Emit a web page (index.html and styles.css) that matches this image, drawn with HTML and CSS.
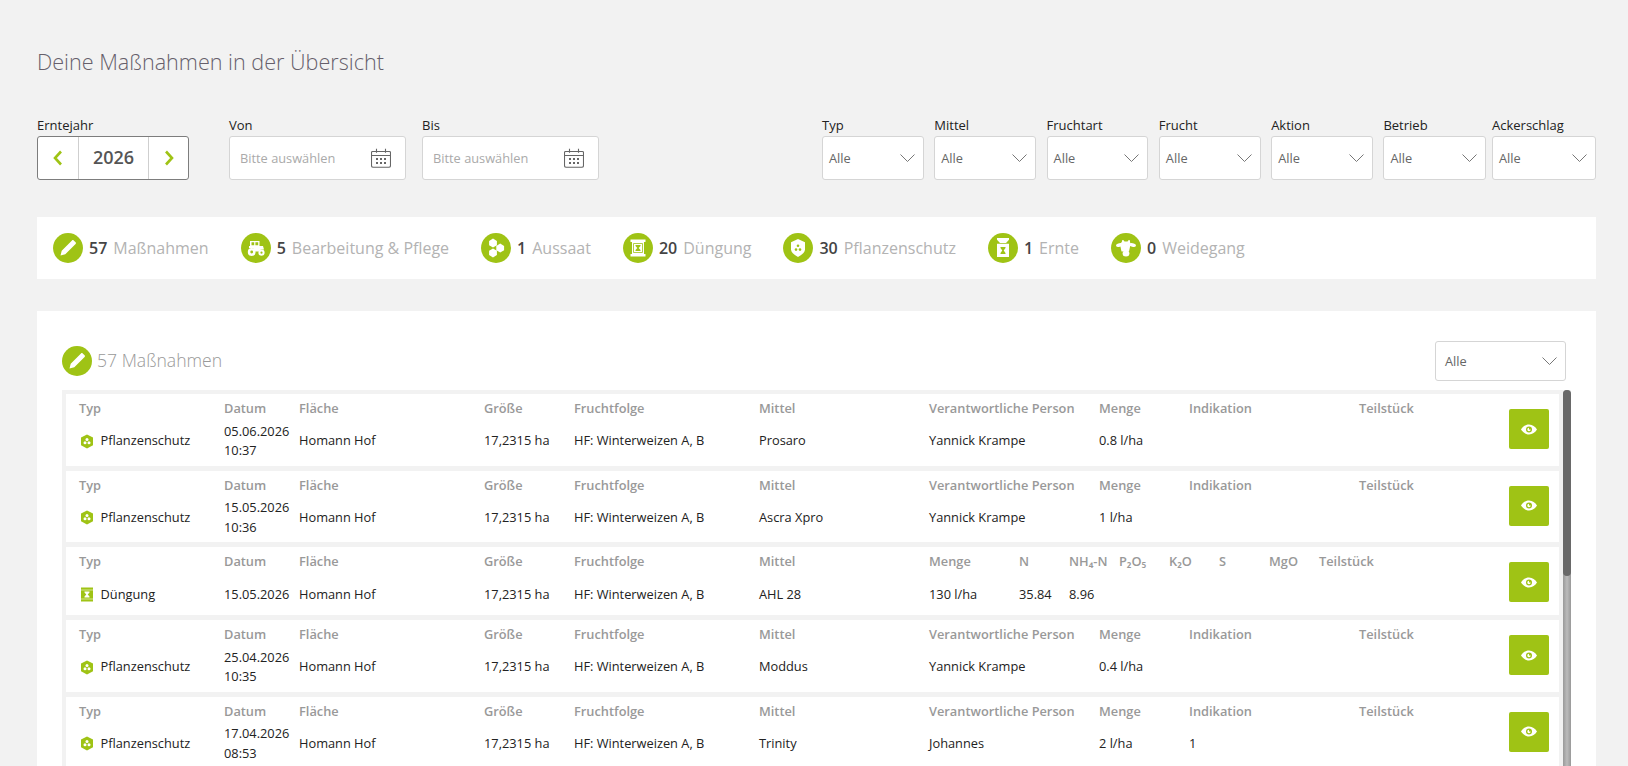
FILE: index.html
```html
<!DOCTYPE html>
<html lang="de">
<head>
<meta charset="utf-8">
<title>Maßnahmen</title>
<link rel="stylesheet" href="styles.css">
</head>
<body>
<svg class="defs" width="0" height="0" aria-hidden="true">
  <defs>
    <symbol id="i-pencil" viewBox="0 0 30 30"><circle cx="15" cy="15" r="15" fill="#9fc315"/><path d="M7.5 22.5l1.2-4.8L19 7.4c.5-.5 1.2-.5 1.7 0l1.900 1.900c.5.5.5 1.200 0 1.700L12.300 21.300z" fill="#fff"/></symbol>
    <symbol id="i-tractor" viewBox="0 0 30 30"><circle cx="15" cy="15" r="15" fill="#9fc315"/><path d="M9 8h9.500v5H22l1 3.500h-3l-2.500 2h-3.500l-2-3.500H8v-2h1zM10.500 9.300v3h2.700v-3zM14.400 9.300v3h2.800v-3z" fill="#fff" fill-rule="evenodd"/><circle cx="10.700" cy="19" r="3.900" fill="#fff"/><circle cx="10.700" cy="19" r="1.400" fill="#9fc315"/><circle cx="20.500" cy="19.700" r="3.100" fill="#fff"/><circle cx="20.500" cy="19.700" r="1.100" fill="#9fc315"/></symbol>
    <symbol id="i-seed" viewBox="0 0 30 30"><circle cx="15" cy="15" r="15" fill="#9fc315"/><path d="M12 5.600l3.900 2.300v4.400L12 14.600l-3.900-2.300V7.900zM19.200 10.600l3.900 2.300v4.400l-3.900 2.300-3.900-2.300v-4.400zM12 15.400l3.900 2.300v4.400L12 24.400l-3.900-2.300v-4.400z" fill="#fff"/></symbol>
    <symbol id="i-fert" viewBox="0 0 30 30"><circle cx="15" cy="15" r="15" fill="#9fc315"/><path d="M7.500 6.500h15V9h-1.500v12h1.500v2.500h-15V21H9V9H7.500z" fill="#fff"/><path d="M10.500 10.500h9v9h-9z" fill="none" stroke="#9fc315" stroke-width=".8"/><path d="M12.500 12h5v1l-1.800 2 1.800 2v1h-5v-1l1.800-2-1.800-2z" fill="#9fc315"/></symbol>
    <symbol id="i-shield" viewBox="0 0 30 30"><circle cx="15" cy="15" r="15" fill="#9fc315"/><path d="M15 6l7 3.200v7.300c0 3-3.300 5.400-7 7.500-3.700-2.100-7-4.500-7-7.500V9.200z" fill="#fff"/><circle cx="15" cy="12.800" r="1.300" fill="#9fc315"/><circle cx="13" cy="16.600" r="1.300" fill="#9fc315"/><circle cx="17" cy="16.600" r="1.300" fill="#9fc315"/></symbol>
    <symbol id="i-harvest" viewBox="0 0 30 30"><circle cx="15" cy="15" r="15" fill="#9fc315"/><path d="M9 5h12v1.800L18 10h-6L9 6.800zM9 10.800h12V24H9z" fill="#fff"/><path d="M12.500 14h5v1l-1.800 2.500 1.800 2.500v1h-5v-1l1.800-2.500-1.800-2.500z" fill="#9fc315"/></symbol>
    <symbol id="i-cow" viewBox="0 0 30 30"><circle cx="15" cy="15" r="15" fill="#9fc315"/><path d="M11 8.500c-.2-1 .8-1.800 1.500-1.200l1 1.200h3l1-1.200c.7-.6 1.700.2 1.500 1.200l.5 3-1.500 7h-7.500l-1.500-7z" fill="#fff"/><ellipse cx="8.500" cy="12" rx="3.500" ry="1.800" fill="#fff" transform="rotate(-12 8.500 12)"/><ellipse cx="21.500" cy="12" rx="3.500" ry="1.800" fill="#fff" transform="rotate(12 21.500 12)"/><ellipse cx="15" cy="20.500" rx="3.400" ry="3" fill="#fff"/></symbol>
    <symbol id="i-shield-s" viewBox="0 0 14 15"><path d="M7 .5l6 3v7.700l-6 3.300-6-3.300V3.500z" fill="#9fc315"/><circle cx="7" cy="5.600" r="1.500" fill="#fff"/><circle cx="5" cy="8.800" r="1.500" fill="#fff"/><circle cx="9" cy="8.800" r="1.500" fill="#fff"/></symbol>
    <symbol id="i-fert-s" viewBox="0 0 14 15"><path d="M1 .5h12v14H1z" fill="#9fc315"/><path d="M1 2.500h12v1H1zM1 11.500h12v1H1z" fill="#d6e58f"/><path d="M4.500 4.500h5v1L7.700 7.500l1.800 2v1h-5v-1l1.800-2-1.800-2z" fill="#fff"/></symbol>
    <symbol id="i-eye" viewBox="0 0 16 11"><path d="M8 .5c3.500 0 6.200 2.300 8 5-1.800 2.700-4.500 5-8 5s-6.200-2.300-8-5c1.800-2.700 4.500-5 8-5z" fill="#fff"/><circle cx="8" cy="5.500" r="3" fill="#9fc315"/><path d="M8 3.800a1.700 1.700 0 1 0 1.700 1.700H8z" fill="#fff"/></symbol>
    <symbol id="i-cal" viewBox="0 0 20 20"><path d="M1.500 3.500h17c.5 0 1 .5 1 1v13c0 1-.8 1.800-1.800 1.800H2.300c-1 0-1.800-.8-1.800-1.800v-13c0-.5.500-1 1-1zM.5 7.500h19M5.500 .8v4M14.500 .8v4" fill="none" stroke="#666" stroke-width="1.100"/><path d="M5 10h2v2H5zM9 10h2v2H9zM13 10h2v2h-2zM5 14h2v2H5zM9 14h2v2H9zM13 14h2v2h-2z" fill="#666"/></symbol>
    <symbol id="i-down" viewBox="0 0 15 8"><path d="M.5.500l7 7 7-7" fill="none" stroke="#777" stroke-width="1"/></symbol>
    <symbol id="i-left" viewBox="0 0 10 16"><path d="M8 1.500L2 8l6 6.500" fill="none" stroke="#9fc315" stroke-width="2.600"/></symbol>
    <symbol id="i-right" viewBox="0 0 10 16"><path d="M2 1.500L8 8l-6 6.500" fill="none" stroke="#9fc315" stroke-width="2.600"/></symbol>
  </defs>
</svg>

<main class="page">
  <h1 class="title">Deine Maßnahmen in der Übersicht</h1>

  <section class="filters">
    <div class="filters-left">
      <div class="field">
        <label class="field-label">Erntejahr</label>
        <div class="year">
          <span class="year-btn year-prev"><svg class="chev"><use href="#i-left"/></svg></span>
          <span class="year-value">2026</span>
          <span class="year-btn year-next"><svg class="chev"><use href="#i-right"/></svg></span>
        </div>
      </div>
      <div class="field field-date field-von">
        <label class="field-label">Von</label>
        <div class="control date"><span>Bitte auswählen</span><svg class="cal"><use href="#i-cal"/></svg></div>
      </div>
      <div class="field field-date">
        <label class="field-label">Bis</label>
        <div class="control date"><span>Bitte auswählen</span><svg class="cal"><use href="#i-cal"/></svg></div>
      </div>
    </div>
    <div class="filters-right">
      <div class="field field-select"><label class="field-label">Typ</label><div class="control select"><span>Alle</span><svg class="down"><use href="#i-down"/></svg></div></div>
      <div class="field field-select"><label class="field-label">Mittel</label><div class="control select"><span>Alle</span><svg class="down"><use href="#i-down"/></svg></div></div>
      <div class="field field-select"><label class="field-label">Fruchtart</label><div class="control select"><span>Alle</span><svg class="down"><use href="#i-down"/></svg></div></div>
      <div class="field field-select"><label class="field-label">Frucht</label><div class="control select"><span>Alle</span><svg class="down"><use href="#i-down"/></svg></div></div>
      <div class="field field-select"><label class="field-label">Aktion</label><div class="control select"><span>Alle</span><svg class="down"><use href="#i-down"/></svg></div></div>
      <div class="field field-select field-wide"><label class="field-label">Betrieb</label><div class="control select"><span>Alle</span><svg class="down"><use href="#i-down"/></svg></div></div>
      <div class="field field-select field-tight"><label class="field-label">Ackerschlag</label><div class="control select"><span>Alle</span><svg class="down"><use href="#i-down"/></svg></div></div>
    </div>
  </section>

  <section class="stats">
    <div class="stat"><svg class="stat-icon"><use href="#i-pencil"/></svg><b>57</b><span>Maßnahmen</span></div>
    <div class="stat"><svg class="stat-icon"><use href="#i-tractor"/></svg><b>5</b><span>Bearbeitung &amp; Pflege</span></div>
    <div class="stat"><svg class="stat-icon"><use href="#i-seed"/></svg><b>1</b><span>Aussaat</span></div>
    <div class="stat"><svg class="stat-icon"><use href="#i-fert"/></svg><b>20</b><span>Düngung</span></div>
    <div class="stat"><svg class="stat-icon"><use href="#i-shield"/></svg><b>30</b><span>Pflanzenschutz</span></div>
    <div class="stat"><svg class="stat-icon"><use href="#i-harvest"/></svg><b>1</b><span>Ernte</span></div>
    <div class="stat"><svg class="stat-icon"><use href="#i-cow"/></svg><b>0</b><span>Weidegang</span></div>
  </section>

  <section class="card">
    <header class="card-head">
      <div class="card-title"><svg class="stat-icon"><use href="#i-pencil"/></svg><h2>57 Maßnahmen</h2></div>
      <div class="control select card-select"><span>Alle</span><svg class="down"><use href="#i-down"/></svg></div>
    </header>

    <div class="list">
      <article class="row row-protect">
        <div class="cell"><div class="th">Typ</div><div class="td type"><svg class="type-icon"><use href="#i-shield-s"/></svg>Pflanzenschutz</div></div>
        <div class="cell"><div class="th">Datum</div><div class="td">05.06.2026<br>10:37</div></div>
        <div class="cell"><div class="th">Fläche</div><div class="td">Homann Hof</div></div>
        <div class="cell"><div class="th">Größe</div><div class="td">17,2315 ha</div></div>
        <div class="cell"><div class="th">Fruchtfolge</div><div class="td">HF: Winterweizen A, B</div></div>
        <div class="cell"><div class="th">Mittel</div><div class="td">Prosaro</div></div>
        <div class="cell"><div class="th">Verantwortliche Person</div><div class="td">Yannick Krampe</div></div>
        <div class="cell"><div class="th">Menge</div><div class="td">0.8 l/ha</div></div>
        <div class="cell"><div class="th">Indikation</div><div class="td"></div></div>
        <div class="cell"><div class="th">Teilstück</div><div class="td"></div></div>
        <button class="eye"><svg class="eye-icon"><use href="#i-eye"/></svg></button>
      </article>

      <article class="row row-protect">
        <div class="cell"><div class="th">Typ</div><div class="td type"><svg class="type-icon"><use href="#i-shield-s"/></svg>Pflanzenschutz</div></div>
        <div class="cell"><div class="th">Datum</div><div class="td">15.05.2026<br>10:36</div></div>
        <div class="cell"><div class="th">Fläche</div><div class="td">Homann Hof</div></div>
        <div class="cell"><div class="th">Größe</div><div class="td">17,2315 ha</div></div>
        <div class="cell"><div class="th">Fruchtfolge</div><div class="td">HF: Winterweizen A, B</div></div>
        <div class="cell"><div class="th">Mittel</div><div class="td">Ascra Xpro</div></div>
        <div class="cell"><div class="th">Verantwortliche Person</div><div class="td">Yannick Krampe</div></div>
        <div class="cell"><div class="th">Menge</div><div class="td">1 l/ha</div></div>
        <div class="cell"><div class="th">Indikation</div><div class="td"></div></div>
        <div class="cell"><div class="th">Teilstück</div><div class="td"></div></div>
        <button class="eye"><svg class="eye-icon"><use href="#i-eye"/></svg></button>
      </article>

      <article class="row row-fert">
        <div class="cell"><div class="th">Typ</div><div class="td type"><svg class="type-icon"><use href="#i-fert-s"/></svg>Düngung</div></div>
        <div class="cell"><div class="th">Datum</div><div class="td">15.05.2026</div></div>
        <div class="cell"><div class="th">Fläche</div><div class="td">Homann Hof</div></div>
        <div class="cell"><div class="th">Größe</div><div class="td">17,2315 ha</div></div>
        <div class="cell"><div class="th">Fruchtfolge</div><div class="td">HF: Winterweizen A, B</div></div>
        <div class="cell"><div class="th">Mittel</div><div class="td">AHL 28</div></div>
        <div class="cell"><div class="th">Menge</div><div class="td">130 l/ha</div></div>
        <div class="cell"><div class="th">N</div><div class="td">35.84</div></div>
        <div class="cell"><div class="th">NH₄-N</div><div class="td">8.96</div></div>
        <div class="cell"><div class="th">P₂O₅</div><div class="td"></div></div>
        <div class="cell"><div class="th">K₂O</div><div class="td"></div></div>
        <div class="cell"><div class="th">S</div><div class="td"></div></div>
        <div class="cell"><div class="th">MgO</div><div class="td"></div></div>
        <div class="cell"><div class="th">Teilstück</div><div class="td"></div></div>
        <button class="eye"><svg class="eye-icon"><use href="#i-eye"/></svg></button>
      </article>

      <article class="row row-protect">
        <div class="cell"><div class="th">Typ</div><div class="td type"><svg class="type-icon"><use href="#i-shield-s"/></svg>Pflanzenschutz</div></div>
        <div class="cell"><div class="th">Datum</div><div class="td">25.04.2026<br>10:35</div></div>
        <div class="cell"><div class="th">Fläche</div><div class="td">Homann Hof</div></div>
        <div class="cell"><div class="th">Größe</div><div class="td">17,2315 ha</div></div>
        <div class="cell"><div class="th">Fruchtfolge</div><div class="td">HF: Winterweizen A, B</div></div>
        <div class="cell"><div class="th">Mittel</div><div class="td">Moddus</div></div>
        <div class="cell"><div class="th">Verantwortliche Person</div><div class="td">Yannick Krampe</div></div>
        <div class="cell"><div class="th">Menge</div><div class="td">0.4 l/ha</div></div>
        <div class="cell"><div class="th">Indikation</div><div class="td"></div></div>
        <div class="cell"><div class="th">Teilstück</div><div class="td"></div></div>
        <button class="eye"><svg class="eye-icon"><use href="#i-eye"/></svg></button>
      </article>

      <article class="row row-protect">
        <div class="cell"><div class="th">Typ</div><div class="td type"><svg class="type-icon"><use href="#i-shield-s"/></svg>Pflanzenschutz</div></div>
        <div class="cell"><div class="th">Datum</div><div class="td">17.04.2026<br>08:53</div></div>
        <div class="cell"><div class="th">Fläche</div><div class="td">Homann Hof</div></div>
        <div class="cell"><div class="th">Größe</div><div class="td">17,2315 ha</div></div>
        <div class="cell"><div class="th">Fruchtfolge</div><div class="td">HF: Winterweizen A, B</div></div>
        <div class="cell"><div class="th">Mittel</div><div class="td">Trinity</div></div>
        <div class="cell"><div class="th">Verantwortliche Person</div><div class="td">Johannes</div></div>
        <div class="cell"><div class="th">Menge</div><div class="td">2 l/ha</div></div>
        <div class="cell"><div class="th">Indikation</div><div class="td">1</div></div>
        <div class="cell"><div class="th">Teilstück</div><div class="td"></div></div>
        <button class="eye"><svg class="eye-icon"><use href="#i-eye"/></svg></button>
      </article>

      <div class="scrollbar"><div class="scrollbar-thumb"></div></div>
    </div>
  </section>
</main>
</body>
</html>
```
FILE: styles.css
```css
* { box-sizing: border-box; }
html, body { margin: 0; height: 766px; overflow: hidden; background: #f2f2f2; }
body { font-family: "Open Sans", "Liberation Sans", sans-serif; font-size: 12.800px; color: #222; }
.defs { position: absolute; }

.page { width: 1559px; margin-left: 37px; padding-top: 47px; }
.title { margin: 0; font-size: 21.600px; line-height: 30px; font-weight: 300; color: #665f6b; }

.filters { display: flex; justify-content: space-between; margin-top: 38px; }
.filters-left, .filters-right { display: flex; }
.filters-right { gap: 10.600px; }
.field-label { display: block; height: 21px; line-height: 20px; font-size: 13px; color: #222; }
.field-date { width: 177px; }
.field-von { margin: 0 16px 0 40px; }
.field-select { width: 101.700px; }
.field-wide { width: 103px; }
.field-tight { width: 104px; margin-left: -5px; }

.year { display: flex; width: 152px; height: 44px; background: #fff; border: 1px solid #7d7d7d; border-radius: 3px; align-items: stretch; }
.year-btn { display: flex; align-items: center; justify-content: center; }
.year-prev { width: 41px; border-right: 1px solid #cfcfcf; }
.year-next { flex: 1; border-left: 1px solid #cfcfcf; }
.year-value { width: 69px; text-align: center; line-height: 40px; font-size: 18px; font-weight: 600; color: #555; }
.chev { width: 10px; height: 16px; }

.control { display: flex; align-items: center; justify-content: space-between; height: 44px; background: #fff; border: 1px solid #d5d5d5; border-radius: 3px; }
.date { padding: 0 14px 0 10px; color: #aaa; }
.cal { width: 20px; height: 20px; }
.select { padding: 0 8px 0 6px; color: #666; }
.down { width: 15px; height: 8px; }

.stats { display: flex; gap: 32px; align-items: center; height: 62px; margin-top: 37px; padding-left: 16px; background: #fff; font-size: 16px; }
.stat { display: flex; align-items: center; }
.stat-icon { width: 30px; height: 30px; margin-right: 6px; }
.stat b { font-weight: 600; color: #444; margin-right: 6px; }
.stat span { color: #b3b3b3; }

.card { height: 500px; margin-top: 32px; padding: 30px 25px 0; background: #fff; }
.card-head { display: flex; justify-content: space-between; align-items: center; height: 40px; padding-right: 5px; margin-bottom: 9px; }
.card-title { display: flex; align-items: center; }
.card-title .stat-icon { margin-right: 5px; }
.card-title h2 { margin: 0 0 2px; font-size: 17.600px; font-weight: 300; color: #999; }
.card-select { width: 131px; height: 40px; padding: 0 8px 0 9px; border-radius: 3px; }

.list { position: relative; display: flex; flex-direction: column; gap: 5px; padding: 4px 12px 0 4px; background: #f2f2f2; }
.row { display: grid; align-items: start; padding: 4px 10px 5px 13px; background: #fff; }
.row-protect { grid-template-columns: 145px 75px 185px 90px 185px 170px 170px 90px 170px 1fr 40px; }
.row-fert { grid-template-columns: 145px 75px 185px 90px 185px 170px 90px 50px 50px 50px 50px 50px 50px 1fr 40px; padding-bottom: 1.200px; }
.cell { display: flex; flex-direction: column; }
.th { height: 20px; line-height: 20px; font-weight: 600; color: #999; white-space: nowrap; }
.td { display: flex; flex-direction: column; justify-content: center; margin-top: 3.600px; min-height: 39px; line-height: 19.500px; color: #222; white-space: nowrap; }
.type { flex-direction: row; justify-content: flex-start; align-items: center; }
.type-icon { width: 14px; height: 15px; margin: 0 6.500px 0 1px; }
.eye { align-self: center; width: 40px; height: 40px; padding: 0; border: 0; border-radius: 2px; background: #9fc315; display: flex; align-items: center; justify-content: center; }
.eye-icon { width: 16px; height: 11px; }

.scrollbar { position: absolute; top: 0; bottom: 0; right: 0; width: 8px; background: linear-gradient(90deg, #999, #bbb 50%, #999); border-radius: 4px 4px 0 0; }
.scrollbar-thumb { height: 186px; background: #696969; border-radius: 4px; }
```
